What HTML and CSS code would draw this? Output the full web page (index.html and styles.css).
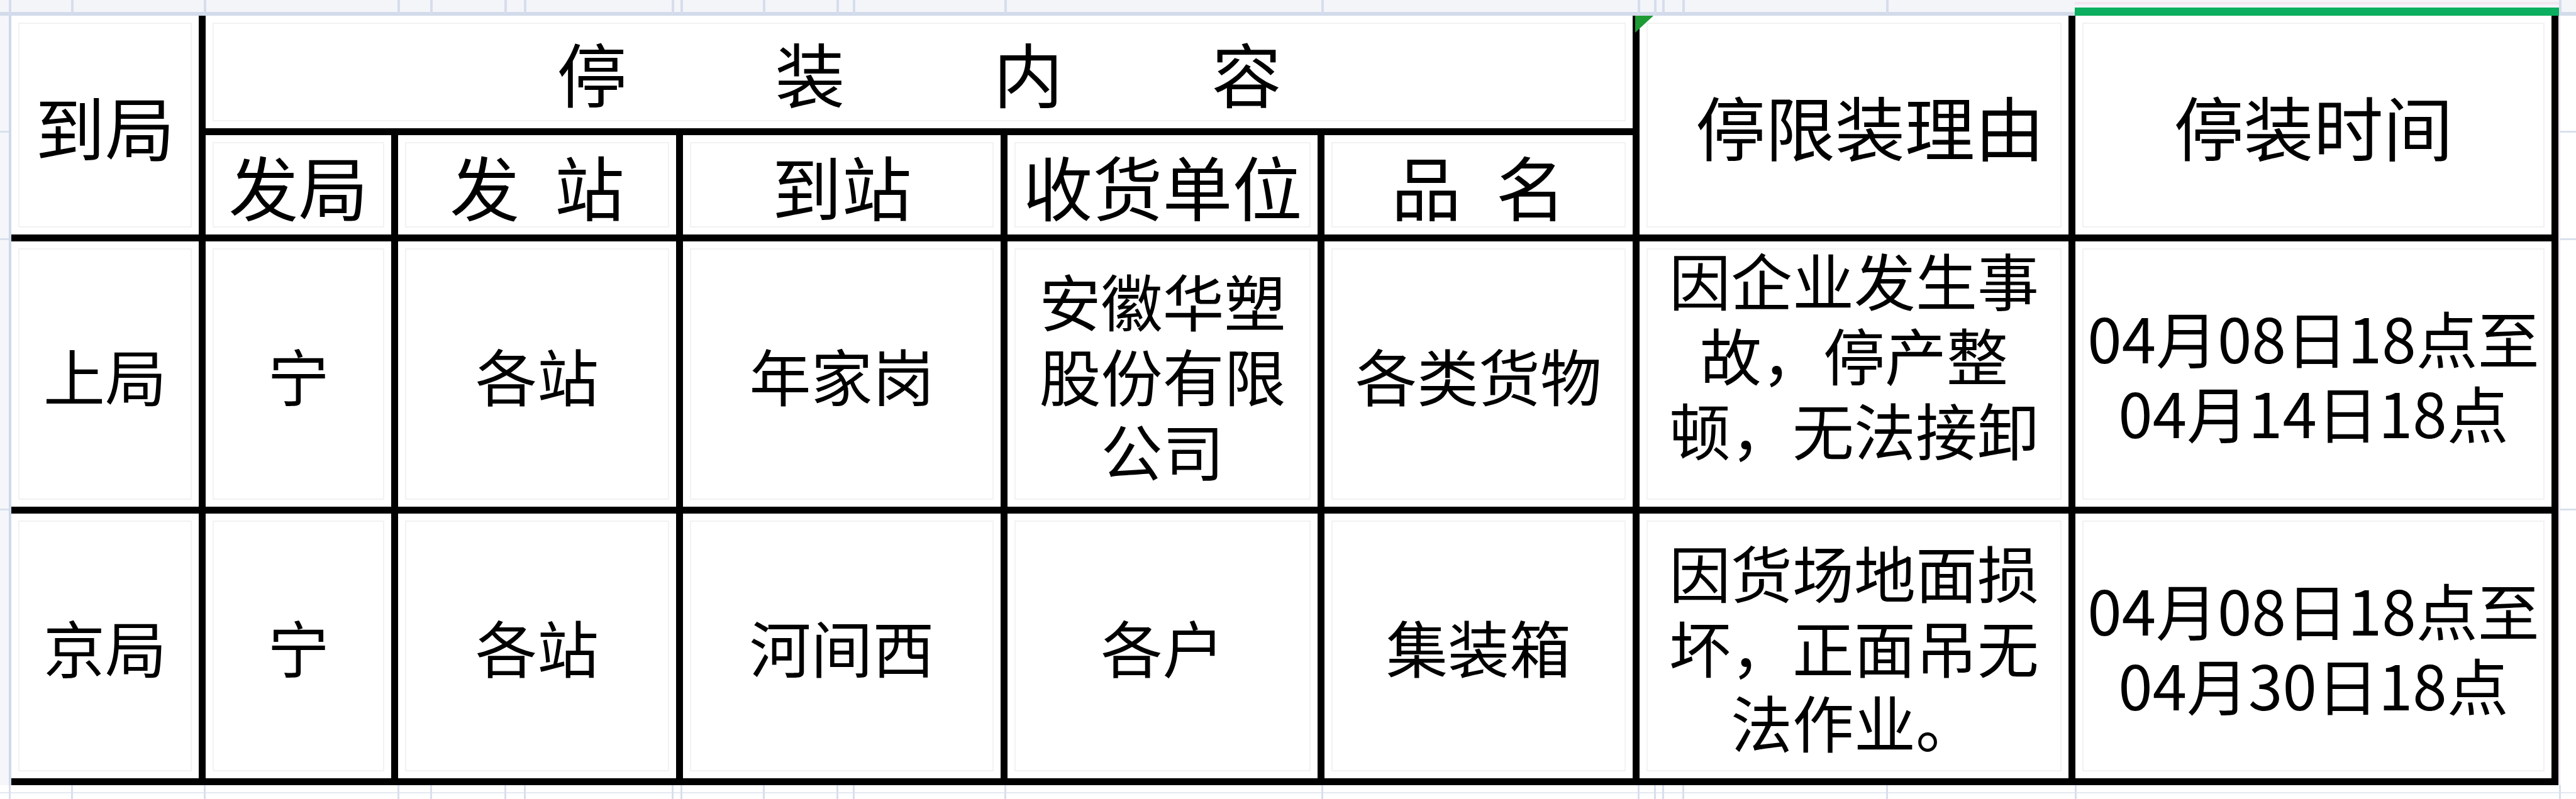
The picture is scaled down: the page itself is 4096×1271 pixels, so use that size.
FILE: index.html
```html
<!DOCTYPE html>
<html lang="zh-CN">
<head>
<meta charset="utf-8">
<title>停装内容</title>
<link rel="stylesheet" href="styles.css">
</head>
<body>
<div class="sheet">
  <div class="band-top">
    <span class="seg first"></span>
    <span class="seg"></span><span class="seg"></span><span class="seg"></span><span class="seg"></span>
    <span class="seg"></span><span class="seg"></span><span class="seg"></span><span class="seg"></span>
    <span class="seg"></span><span class="seg"></span><span class="seg"></span><span class="seg"></span>
    <span class="seg"></span><span class="seg"></span><span class="seg"></span><span class="seg"></span>
    <span class="seg"></span><span class="seg"></span><span class="seg"></span>
    <span class="seg sel"></span>
    <span class="seg"></span>
  </div>

  <div class="band-left">
    <span class="stub s1"></span><span class="stub s2"></span><span class="stub s3"></span><span class="stub s4"></span>
  </div>

  <div class="tbl">
    <div class="c h">到局</div>
    <div class="c h title"><span>停</span><span>装</span><span>内</span><span>容</span></div>
    <div class="c h reason-h">停限装理由<i class="flag"></i></div>
    <div class="c h">停装时间</div>

    <div class="c h">发局</div>
    <div class="c h">发&ensp;站</div>
    <div class="c h">到站</div>
    <div class="c h">收货单位</div>
    <div class="c h">品&ensp;名</div>

    <div class="c">上局</div>
    <div class="c">宁</div>
    <div class="c">各站</div>
    <div class="c">年家岗</div>
    <div class="c"><div class="lines"><span class="ln">安徽华塑</span><span class="ln">股份有限</span><span class="ln">公司</span></div></div>
    <div class="c">各类货物</div>
    <div class="c top"><div class="lines"><span class="ln">因企业发生事</span><span class="ln">故，停产整</span><span class="ln">顿，无法接卸</span></div></div>
    <div class="c"><div class="lines"><span class="ln">04月08日18点至</span><span class="ln">04月14日18点</span></div></div>

    <div class="c">京局</div>
    <div class="c">宁</div>
    <div class="c">各站</div>
    <div class="c">河间西</div>
    <div class="c">各户</div>
    <div class="c">集装箱</div>
    <div class="c"><div class="lines"><span class="ln">因货场地面损</span><span class="ln">坏，正面吊无</span><span class="ln">法作业。</span></div></div>
    <div class="c"><div class="lines"><span class="ln">04月08日18点至</span><span class="ln">04月30日18点</span></div></div>
  </div>

  <div class="band-right">
    <span class="stub s1"></span><span class="stub s2"></span><span class="stub s3"></span><span class="stub s4"></span>
  </div>

  <div class="band-bottom">
    <span class="seg first"></span>
    <span class="seg"></span><span class="seg"></span><span class="seg"></span><span class="seg"></span>
    <span class="seg"></span><span class="seg"></span><span class="seg"></span><span class="seg"></span>
    <span class="seg"></span><span class="seg"></span><span class="seg"></span><span class="seg"></span>
    <span class="seg"></span><span class="seg"></span><span class="seg"></span><span class="seg"></span>
    <span class="seg"></span><span class="seg"></span><span class="seg"></span>
    <span class="seg"></span>
    <span class="seg"></span>
  </div>
</div>
</body>
</html>
```

FILE: styles.css
```css
* { box-sizing: border-box; }

html, body {
  margin: 0;
  padding: 0;
  background: #ffffff;
}

body {
  font-family: "Noto Sans CJK SC", "Noto Sans", sans-serif;
  color: #000;
}

.sheet {
  width: 4096px;
  height: 1271px;
  overflow: hidden;
  display: grid;
  grid-template-columns: 18px 4050px 1fr;
  grid-template-rows: 25px 1224px 1fr;
}

/* spreadsheet column strip above and below the table */
.band-top,
.band-bottom {
  grid-column: 1 / -1;
  display: grid;
  grid-template-columns: 14px 99px 211px 308px 52px 118px 31px 235px 14px 131px 117px 26px 241px 504px 503px 26px 13px 32px 324px 300px 770px 1fr;
}

.band-top {
  background: #f3f5f9;
}

.band-top .seg {
  height: 25px;
  border-left: 4px solid #d6ddec;
  border-bottom: 6px solid #d3dbea;
}

.band-top .seg.first {
  border-left: none;
}

.band-top .seg.sel {
  border-left: none;
  background: linear-gradient(to bottom, #f3f5f9 0, #f3f5f9 3px, #f2e6ef 3px, #f2e6ef 7px, #f3f5f9 7px);
  border-bottom: 13px solid #0cae5f;
}

.band-bottom {
  background: linear-gradient(to bottom, #ffffff 0, #ffffff 11px, #e6e9f0 11px, #e6e9f0 13px, #ffffff 13px);
}

.band-bottom .seg {
  height: 22px;
  border-left: 3px solid #d8dfed;
}

.band-bottom .seg.first {
  border-left: none;
}

/* row-header strip at the left, sheet margin at the right */
.band-left {
  display: flex;
  flex-direction: column;
  background: #f5f6f9;
  border-right: 4px solid #cfd8ea;
}

.band-right {
  display: flex;
  flex-direction: column;
  background: #ffffff;
  border-left: 3px solid #ece6ef;
}

.stub {
  border-bottom: 3px solid #d9e0ed;
}

.stub.s1 { height: 186px; }
.stub.s2 { height: 171px; }
.stub.s3 { height: 430px; }
.stub.s4 { flex: 1; border-bottom: none; }

/* the table */
.tbl {
  display: grid;
  grid-template-columns: 298px 295px 442px 505px 493px 490px 682px 757px;
  grid-template-rows: 179px 158px 422px 421px;
  gap: 11px;
  padding: 0 11px 11px 0;
  background: #000;
}

.c {
  position: relative;
  background: #fff;
  display: flex;
  align-items: center;
  justify-content: center;
  text-align: center;
  font-size: 98px;
  line-height: 119px;
  white-space: nowrap;
  outline: 2px solid #f2f2f2;
  outline-offset: -13px;
}

.c.h {
  font-size: 111px;
  line-height: 1;
}

.lines {
  display: flex;
  flex-direction: column;
  align-items: center;
}

.ln {
  display: block;
  height: 119px;
  line-height: 119px;
}

.tbl > .c:nth-child(1) { grid-row: span 2; }
.tbl > .title { grid-column: span 5; gap: 236px; }
.tbl > .reason-h { grid-row: span 2; padding-left: 51px; }
.tbl > .c:nth-child(4) { grid-row: span 2; }

.c.top {
  align-items: flex-start;
}

.flag {
  position: absolute;
  left: -7px;
  top: 0;
  width: 0;
  height: 0;
  border-top: 27px solid #1e9b35;
  border-right: 29px solid transparent;
}
```
